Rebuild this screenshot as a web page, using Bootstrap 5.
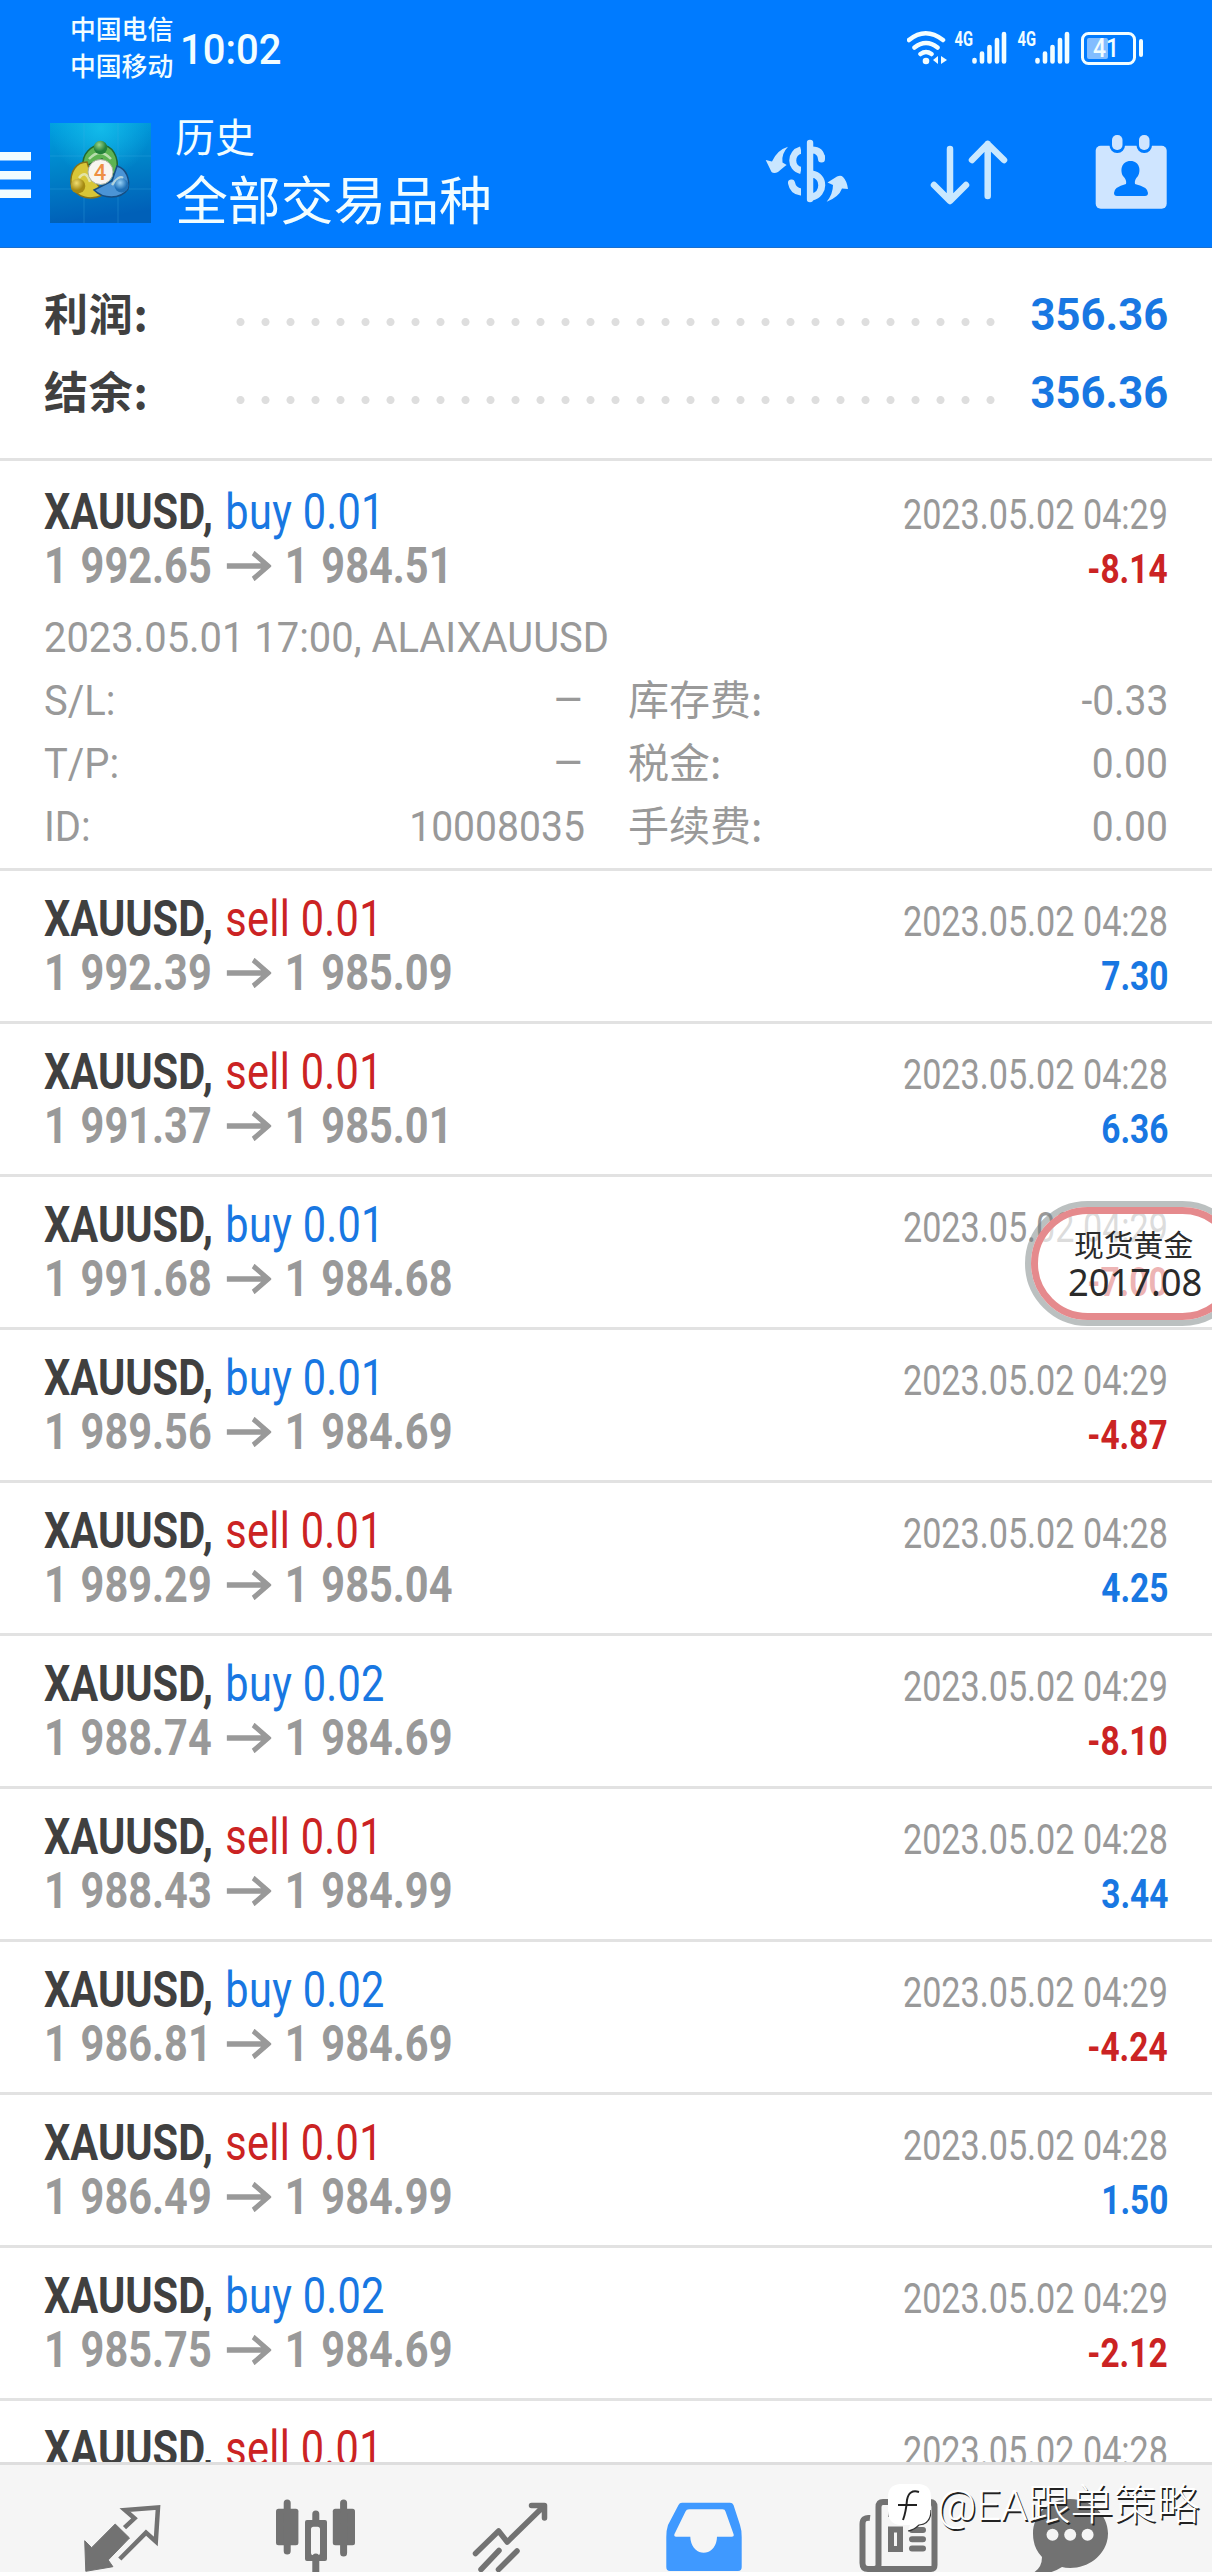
<!DOCTYPE html>
<html lang="zh-CN">
<head>
<meta charset="utf-8">
<meta name="viewport" content="width=device-width, initial-scale=1">
<title>历史 - 全部交易品种</title>
<link href="https://cdn.jsdelivr.net/npm/bootstrap@5.3.0/dist/css/bootstrap.min.css" rel="stylesheet">
<style>
:root{--brand:#007bff;--pos:#1877e2;--neg:#cb2323;--mute:#999}
body{font-family:Roboto,"Noto Sans CJK SC",sans-serif;background:#fff;color:#404040}
svg{display:block;flex:none}
.screen{width:1212px;height:2572px}
.top-bar{height:248px;background:var(--brand);color:#f2fdff;border-bottom:1px solid #1a6fcf}
.status{height:100px;padding:9px 65px 0 70px}
.carrier{font-size:25.8px;line-height:37px;width:110px;font-weight:500;font-family:"Noto Sans CJK SC",sans-serif}
.clock{font-size:43px;line-height:50px;font-weight:500;padding-top:15px;transform:scaleX(.93);transform-origin:left}
.app-bar{height:147px;padding-right:42px}
.logo{margin-left:19px;margin-top:23px}
.titles{margin-left:24px;padding-top:10px;font-family:"Noto Sans CJK SC",sans-serif}
.t-small{font-size:40px;line-height:50px}
.t-large{font-size:52.8px;line-height:74px}
.tools{gap:80px;padding-top:30px}
.summary{height:213px;border-bottom:3px solid #e2e2e2;padding:28px 44px 0}
.sum-line{height:78px;line-height:78px}
.sum-label{width:184px;font-size:44px;font-weight:700;letter-spacing:.8px;font-family:"Noto Sans CJK SC",sans-serif;margin-top:-6px}
.dots{width:775px;height:10px;margin-top:14px;background:radial-gradient(circle at 12.5px 5px,#dedede 0 3.6px,transparent 4.4px) 0 0/25px 10px repeat-x}
.sum-value{font-size:45px;font-weight:700;color:var(--pos);transform:scaleX(.968);transform-origin:right}
.deal{height:153px;border-bottom:3px solid #e2e2e2;padding:21px 44px 0}
.deal.open{height:410px;padding-top:24px}
.deal-line{height:54px;line-height:54px;font-size:50px;white-space:nowrap}
.sym,.prices{transform:scaleX(.83);transform-origin:left;display:inline-block}
.sym b{font-weight:700;margin-right:2.5px}
.sym span{letter-spacing:.35px}
.prices{font-weight:700;color:var(--mute);word-spacing:3px}
.prices svg{display:inline-block;margin:0 16px 0 18px;vertical-align:2px}
.when,.net{line-height:1;transform-origin:right;display:inline-block}
.when{font-size:42px;color:var(--mute);transform:scaleX(.813)}
.net{font-size:41px;font-weight:700;transform:scaleX(.815)}
.pos{color:var(--pos)}.neg{color:var(--neg)}
.details{margin-top:13px;font-size:42px;line-height:63px;color:var(--mute);white-space:nowrap}
.details>div{height:63px}
.sq{display:inline-block;transform:scaleX(.95);transform-origin:left}
.sq.end{transform-origin:right;transform:scaleX(.93)}
.dash{display:inline-block;transform:scaleX(1.25);transform-origin:right}
.half-l{width:541px}.half-r{width:540px}
.zh{font-size:41px;font-family:"Noto Sans CJK SC",sans-serif;margin-top:-3px}
.tabs{height:110px;background:#f5f5f5;border-top:3px solid #dedede;padding:30px 0 0 72px;gap:94px;color:#727272}
.quote{right:-33px;top:1201px;width:220px;height:125px;border-radius:63px;border:6px solid rgba(120,130,130,.5);color:#2b2b2b}
.quote-in{border:7px solid #e58a8d;border-radius:57px;height:100%;background:rgba(255,255,255,.66);padding:13px 0 0 30px}
.q-name{font-size:29.8px;line-height:32px;padding-left:6px;font-family:"Noto Sans CJK SC",sans-serif}
.q-val{font-size:38px;line-height:45px;font-family:"Noto Sans",sans-serif;transform:scaleX(.955);transform-origin:left}
.mark-line{left:888px;top:2474px;gap:6px;color:#fff;font:300 43px/62px Roboto,"Noto Sans CJK SC",sans-serif;text-shadow:1.5px 1.5px .5px #222;white-space:nowrap}
</style>
</head>
<body>
<div class="screen position-relative overflow-hidden d-flex flex-column">
  <header class="top-bar flex-shrink-0">
    <div class="status d-flex align-items-start">
      <div class="carrier text-nowrap"><div>中国电信</div><div>中国移动</div></div>
      <div class="clock">10:02</div>
      <svg class="ms-auto" style="margin-top:19px" width="240" height="40" viewBox="907 28 240 40" fill="none" stroke="#f2fdff" stroke-linecap="round">
        <path d="M909 40Q925.500 26.500 943 40M914.500 47.500Q926 38.500 937.500 47.500M920.500 54Q926 50 931.500 54" stroke-width="4.500"/>
        <circle cx="926" cy="61" r="3.300" fill="#f2fdff" stroke="none"/>
        <path d="M938 56v8l-5-4zM941 56v8l6-4z" fill="#f2fdff" stroke="none"/>
        <g fill="#f2fdff" stroke="none" font-family="Roboto" font-weight="700" font-size="20"><text x="954.500" y="46" textLength="18.500" lengthAdjust="spacingAndGlyphs">4G</text><text x="1017.500" y="46" textLength="18.500" lengthAdjust="spacingAndGlyphs">4G</text></g>
        <path d="M974.500 60v1.500M982 53.500v8M989.500 47v14.500M997 40v21.500M1004 34v27.500M1037.500 60v1.500M1045 53.500v8M1052.500 47v14.500M1060 40v21.500M1067 34v27.500" stroke-width="4.600"/>
        <rect x="1082.500" y="33.500" width="52" height="30" rx="6" stroke-width="3"/>
        <rect x="1087" y="38" width="21" height="21" rx="2" fill="#82bdff" stroke="none"/>
        <path d="M1141 41v14" stroke-width="4"/>
        <text x="1093" y="57" font-family="Roboto" font-weight="500" font-size="26" fill="#f2fdff" stroke="none" textLength="26" lengthAdjust="spacingAndGlyphs">41</text>
      </svg>
    </div>
    <div class="app-bar d-flex align-items-start">
      <svg width="31" height="46" viewBox="0 0 31 46" style="margin-top:52px" fill="#f2fdff"><path d="M0 0h31v8.500H0zM0 19h31v8.500H0zM0 37.500h31v8.500H0z"/></svg>
      <svg class="logo" width="101" height="100" viewBox="0 0 101 100">
        <defs>
          <linearGradient id="sky" x1="0" y1="0" x2=".15" y2="1"><stop offset="0" stop-color="#00a0e0"/><stop offset=".5" stop-color="#0082c8"/><stop offset="1" stop-color="#0060b8"/></linearGradient>
          <radialGradient id="sheen" cx=".5" cy=".05" r=".5"><stop offset="0" stop-color="#17c3ee" stop-opacity=".8"/><stop offset="1" stop-color="#17c3ee" stop-opacity="0"/></radialGradient>
          <radialGradient id="gb" cx=".4" cy=".3"><stop offset="0" stop-color="#9bd58b"/><stop offset="1" stop-color="#23803a"/></radialGradient>
          <radialGradient id="yb" cx=".4" cy=".3"><stop offset="0" stop-color="#f0dd70"/><stop offset="1" stop-color="#a58a12"/></radialGradient>
          <radialGradient id="bb" cx=".4" cy=".3"><stop offset="0" stop-color="#98d1f5"/><stop offset="1" stop-color="#1e6fb6"/></radialGradient>
        </defs>
        <path fill="url(#sky)" d="M0 0h101v100H0z"/><path fill="url(#sheen)" d="M0 0h101v100H0z"/>
        <path d="M34 0v100M68 0v100M0 33h101M0 66h101" stroke="#3fb0e4" stroke-opacity=".3"/>
        <g stroke-width="1.500">
          <path d="M33 43C32 31 41 22 51 22C62 22 69 33 67 48L62 52L52 36L38 42z" fill="#5db352" stroke="#23692f"/>
          <path d="M37 39C26 39 20 49 21 61C26 76 42 78 54 71L41 52z" fill="#d8c637" stroke="#877216"/>
          <path d="M67 43C77 46 80 57 78 66C70 77 53 76 44 67L62 58z" fill="#4a94d6" stroke="#174e82"/>
        </g>
        <path d="M39 36Q50 24 61 36M29 55Q36 46 40 59M62 62Q69 52 73 55" fill="none" stroke="#e9f5df" stroke-opacity=".65" stroke-width="2.500"/>
        <circle cx="50.500" cy="24.500" r="6.800" fill="url(#gb)"/><circle cx="28" cy="63" r="7.300" fill="url(#yb)"/><circle cx="71.500" cy="62.500" r="7" fill="url(#bb)"/>
        <circle cx="50.500" cy="49" r="12.500" fill="#f8f5f0" stroke="#a9b2a0"/>
        <text x="50" y="57" text-anchor="middle" font-family="Roboto" font-weight="500" font-size="22" fill="#ee8f43">4</text>
      </svg>
      <div class="titles text-nowrap"><div class="t-small">历史</div><div class="t-large">全部交易品种</div></div>
      <div class="tools d-flex ms-auto">
        <svg width="88" height="82" viewBox="-2 0 88 82" fill="none" stroke="#c9e6ff" stroke-width="7">
          <path d="M46 13v56" stroke-width="6.500" stroke-linecap="round"/>
          <path d="M37 20C26 23 26 38 37 40.500M48 20Q57 20 57.500 29M48 44C61 46 61 64 48 67"/>
          <path d="M27.500 53Q29 61 37 62M57.500 27v2" stroke-linecap="round"/><path d="M37 8h5.500v66H37z" fill="#007bff" stroke="none"/>
          <g fill="#c9e6ff" stroke="none"><path d="M24 16.700Q17 24 18.500 32.500L22.700 35Q21 36 14 42Q10 44 7.500 42L1.700 30L8 31.500Q13 20 24 16.700z"/><path d="M62.700 71.700Q75 67 78 58.500L84 59Q83 51 79 47Q77 45 73 46.500L63.500 52.500L69 55Q69 64 62.700 71.700z"/></g>
        </svg>
        <svg width="82" height="82" viewBox="2 0 82 82" fill="none" stroke="#c9e8ff" stroke-width="6.500" stroke-linecap="round" stroke-linejoin="round"><path d="M22 19v51M6 55l16 16 16-16M59.700 66V14M44 30l15.700-16L76 30"/></svg>
        <svg width="78" height="82" viewBox="0 0 78 82"><rect x="3.700" y="15.700" width="71" height="63" rx="5" fill="#cfe5ff"/><rect x="17.500" y="2" width="15.500" height="21" rx="7.500" fill="#007bff"/><rect x="44.500" y="2" width="15.500" height="21" rx="7.500" fill="#007bff"/><rect x="20" y="5" width="10.500" height="15" rx="5" fill="#cfe5ff"/><rect x="47" y="5" width="10.500" height="15" rx="5" fill="#cfe5ff"/><path d="M38.500 31C48 31 49 41 46 46Q42 50 43 54Q56 57 56 63Q56 66 53 66H25Q22 66 22 63Q22 57 34 54Q35 50 31 46C28 41 29 31 38.500 31z" fill="#007bff"/></svg>
      </div>
    </div>
  </header>

  <section class="summary flex-shrink-0">
    <div class="sum-line d-flex align-items-center"><div class="sum-label">利润:</div><div class="dots"></div><div class="sum-value ms-auto">356.36</div></div>
    <div class="sum-line d-flex align-items-center"><div class="sum-label">结余:</div><div class="dots"></div><div class="sum-value ms-auto">356.36</div></div>
  </section>

  <main id="deals" class="flex-grow-1 overflow-hidden"></main>

  <nav class="tabs d-flex flex-shrink-0">
    <svg width="100" height="77" viewBox="0 0 100 77"><path d="M43.200 29L57.500 43L36.200 65L40.900 71.700L13.800 76.300L12.700 45.700L19.600 52.700z" fill="currentColor" stroke="currentColor" stroke-linejoin="round"/><path d="M52.500 32.700L62.500 23.300L53 15L86 12.500L83.800 46.500L74 37.700L47.800 64" fill="none" stroke="currentColor" stroke-width="4.500"/></svg>
    <svg width="100" height="77" viewBox="0 0 100 77" fill="currentColor"><rect x="10" y="13.700" width="22.400" height="36.500" rx="2.500"/><rect x="66.800" y="13.700" width="22.200" height="36.500" rx="2.500"/><path d="M21.200 8v48M77.600 8v50M49.800 19v8M49.800 62v20" stroke="currentColor" stroke-width="7" stroke-linecap="round"/><path fill-rule="evenodd" d="M41 25h18q2 0 2 2v37q0 2-2 2H41q-2 0-2-2V27q0-2 2-2zM47.500 31.700q-2.500 0-2.500 2.500v23.500q0 2.500 2.500 2.500h4q2.500 0 2.500-2.500V34.200q0-2.500-2.500-2.500z"/></svg>
    <svg width="100" height="77" viewBox="0 0 100 77" fill="none" stroke="currentColor" stroke-width="5.500" stroke-linecap="round" stroke-linejoin="round"><path d="M15.500 58.500L38.600 36L47.200 47L83.500 11.500M71.500 10.500h13V23M39 55.500L21 74.500M57 56L38.500 74.500"/></svg>
    <svg width="100" height="77" viewBox="0 0 100 77"><path fill="#3f99ff" fill-rule="evenodd" d="M28 7.700H76Q78.500 7.700 79.500 10L86 30Q87.700 35 87.700 42V72Q87.700 76 84 76H16Q12.300 76 12.300 72V42Q12.300 35 14 30L24.500 10Q25.500 7.700 28 7.700zM35 14.300Q32.500 14.300 31.500 16.500L20.500 39Q19.500 41.700 22 41.700H36.300C37 63 62.500 63 63 41.700H78Q80.500 41.700 79.500 39L71.500 16.500Q71 14.300 68.500 14.300z"/></svg>
    <svg width="100" height="77" viewBox="0 0 100 77" fill="none" stroke="currentColor" stroke-width="6"><path d="M22 23Q14.500 22 14.500 29V68Q14.500 74 20 74H83Q86.500 74 86.500 70V12Q86.500 7 82 7H35Q30.500 7 30.500 12V70Q30.500 74 26 74"/><path d="M43 34.500h9v19.500h-9zM40 19h22"/><path d="M64 35h11M64 44.200h11M64 53.500h11" stroke-linecap="round"/></svg>
    <svg width="100" height="77" viewBox="0 0 100 77" style="margin-left:-22px"><path d="M50.200 4C71 4 88 19.500 88 38.400S71 73 50.200 73Q45 73 42 72Q28 81 13 78Q22 73 22 62Q13 53 13 38.400C13 19.500 29 4 50.200 4z" fill="currentColor"/><g fill="#f5f5f5"><circle cx="32.500" cy="39.700" r="6"/><circle cx="50.200" cy="39.700" r="6"/><circle cx="67.600" cy="39.700" r="6"/></g></svg>
  </nav>

  <div class="quote position-absolute"><div class="quote-in text-nowrap"><div class="q-name">现货黄金</div><div class="q-val">2017.08</div></div></div>

  <div class="mark-line position-absolute d-flex align-items-center">
    <svg width="43" height="48" viewBox="0 0 43 48" style="margin-top:5px"><path d="M12 0H31Q43 1 43 13V27Q43 40 31 41Q26 46 20 47L22 41H12Q0 40 0 27V13Q0 1 12 0z" fill="#fff"/><path d="M43 26Q43 40 31 41Q26 46 20 47" fill="none" stroke="#333" stroke-width="1.200"/><path d="M31 8Q21 5 19 16Q18 28 15 36M10 21H29" fill="none" stroke="#222" stroke-width="2"/></svg>
    <span>@EA跟单策略</span>
  </div>
</div>

<script>
const deals = [
  ['buy','0.01','1 992.65','1 984.51','04:29','-8.14'],
  ['sell','0.01','1 992.39','1 985.09','04:28','7.30'],
  ['sell','0.01','1 991.37','1 985.01','04:28','6.36'],
  ['buy','0.01','1 991.68','1 984.68','04:29','-7.00'],
  ['buy','0.01','1 989.56','1 984.69','04:29','-4.87'],
  ['sell','0.01','1 989.29','1 985.04','04:28','4.25'],
  ['buy','0.02','1 988.74','1 984.69','04:29','-8.10'],
  ['sell','0.01','1 988.43','1 984.99','04:28','3.44'],
  ['buy','0.02','1 986.81','1 984.69','04:29','-4.24'],
  ['sell','0.01','1 986.49','1 984.99','04:28','1.50'],
  ['buy','0.02','1 985.75','1 984.69','04:29','-2.12'],
  ['sell','0.01','','','04:28','']
];
const arrow = '<svg width="54" height="30" viewBox="0 0 54 30" fill="none" stroke="#999" stroke-width="5.500"><path d="M0 15H50M32 2L50 15L32 28"/></svg>';
const dash = '<span class="dash">–</span>';
const pair = (a, b, c, d) => `<div class="d-flex justify-content-between">
  <div class="half-l d-flex justify-content-between"><span class="sq">${a}</span><span class="sq end">${b}</span></div>
  <div class="half-r d-flex justify-content-between"><span class="zh">${c}</span><span class="sq end">${d}</span></div></div>`;
const details = `<div class="details"><div><span class="sq">2023.05.01 17:00, ALAIXAUUSD</span></div>
  ${pair('S/L:',dash,'库存费:','-0.33')}${pair('T/P:',dash,'税金:','0.00')}${pair('ID:','10008035','手续费:','0.00')}</div>`;
document.getElementById('deals').innerHTML = deals.map(([side, lot, from, to, time, net], i) => `
  <article class="deal ${i ? '' : 'open'}">
    <div class="deal-line d-flex justify-content-between align-items-baseline">
      <span class="sym"><b>XAUUSD,</b> <span class="${side === 'buy' ? 'pos' : 'neg'}">${side} ${lot}</span></span>
      <span class="when">2023.05.02 ${time}</span>
    </div>
    ${from ? `<div class="deal-line d-flex justify-content-between align-items-baseline">
      <span class="prices">${from}${arrow}${to}</span>
      <span class="net ${net[0] === '-' ? 'neg' : 'pos'}">${net}</span>
    </div>` : ''}
    ${i ? '' : details}
  </article>`).join('');
</script>
<script src="https://cdn.jsdelivr.net/npm/bootstrap@5.3.0/dist/js/bootstrap.bundle.min.js"></script>
</body>
</html>
